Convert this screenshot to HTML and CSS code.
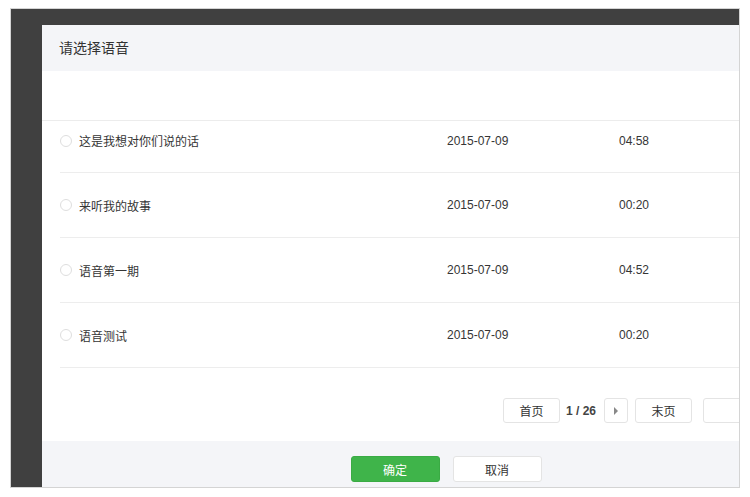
FILE: index.html
```html
<!DOCTYPE html>
<html lang="zh">
<head>
    <meta charset="UTF-8">
    <meta name="viewport" content="width=device-width, initial-scale=1.0">
    <title>请选择语音</title>
    <link rel="stylesheet" href="styles.css">
</head>
<body>
    <div class="screen">
        <div class="dialog">
            <div class="dialog-hd">请选择语音</div>

            <div class="dialog-bd">
                <div class="list-head"></div>
                <ul class="voice-list">
                    <li class="voice-item first">
                        <span class="col-name"><i class="radio"></i>这是我想对你们说的话</span>
                        <span class="col-date">2015-07-09</span>
                        <span class="col-time">04:58</span>
                    </li>
                    <li class="voice-item">
                        <span class="col-name"><i class="radio"></i>来听我的故事</span>
                        <span class="col-date">2015-07-09</span>
                        <span class="col-time">00:20</span>
                    </li>
                    <li class="voice-item">
                        <span class="col-name"><i class="radio"></i>语音第一期</span>
                        <span class="col-date">2015-07-09</span>
                        <span class="col-time">04:52</span>
                    </li>
                    <li class="voice-item">
                        <span class="col-name"><i class="radio"></i>语音测试</span>
                        <span class="col-date">2015-07-09</span>
                        <span class="col-time">00:20</span>
                    </li>
                </ul>

                <div class="pager">
                    <a class="btn-page">首页</a>
                    <span class="page-num">1 / 26</span>
                    <a class="btn-page btn-arrow">
                        <svg width="6" height="8" viewBox="0 0 6 8"><path d="M1 0 L5 4 L1 8 Z" fill="#888"/></svg>
                    </a>
                    <a class="btn-page">末页</a>
                    <input class="page-input" type="text">
                </div>
            </div>

            <div class="dialog-ft">
                <button type="button" class="btn btn-primary">确定</button>
                <button type="button" class="btn btn-default">取消</button>
            </div>
        </div>
    </div>
</body>
</html>
```

FILE: styles.css
```css
body {
    margin: 0;
    background-color: #fff;
    font-family: "Liberation Sans", "Noto Sans CJK SC", sans-serif;
    color: #353535;
}
.screen {
    margin: 8px 0 0 10px;
    width: 728px;
    height: 478px;
    background-color: #404040;
    border: 1px solid #d4d4d4;
    overflow: hidden;
}
.dialog {
    margin: 16px 0 0 31px;
    width: 808px;
    background-color: #fff;
}
.dialog-hd {
    height: 46px;
    line-height: 46px;
    padding-left: 17px;
    font-size: 14px;
    background-color: #f4f5f8;
    color: #333;
}
.list-head {
    height: 49px;
    border-bottom: 1px solid #ececec;
}
.voice-list {
    list-style: none;
    margin: 0;
    padding: 0 0 0 18px;
}
.voice-item {
    display: flex;
    align-items: center;
    height: 64px;
    border-bottom: 1px solid #ededed;
    font-size: 12px;
}
.voice-item.first {
    height: 39px;
    padding-bottom: 12px;
}
.col-name {
    display: flex;
    align-items: center;
    width: 387px;
}
.radio {
    width: 10px;
    height: 10px;
    border: 1px solid #dedede;
    border-radius: 50%;
    margin-right: 7px;
}
.col-date {
    width: 172px;
}
.pager {
    display: flex;
    align-items: center;
    height: 25px;
    margin-top: 30px;
    padding-left: 461px;
    font-size: 12px;
}
.btn-page {
    display: flex;
    align-items: center;
    justify-content: center;
    box-sizing: border-box;
    width: 57px;
    height: 25px;
    border: 1px solid #e4e4e4;
    border-radius: 3px;
    color: #333;
    margin-right: 7px;
}
.btn-arrow {
    width: 24px;
}
.page-num {
    margin: 0 8px 0 -1px;
    font-weight: bold;
    color: #444;
}
.page-input {
    box-sizing: border-box;
    width: 80px;
    height: 25px;
    margin-left: 4px;
    border: 1px solid #e4e4e4;
    border-radius: 3px;
}
.dialog-ft {
    display: flex;
    justify-content: center;
    gap: 13px;
    height: 31px;
    margin-top: 18px;
    padding-top: 15px;
    background-color: #f4f5f8;
}
.btn {
    width: 89px;
    height: 26px;
    font-family: inherit;
    font-size: 12px;
    border-radius: 3px;
    cursor: pointer;
}
.btn-primary {
    background-color: #3fb44a;
    border: 1px solid #3aab44;
    color: #fff;
}
.btn-default {
    background-color: #fff;
    border: 1px solid #e4e4e4;
    color: #333;
}
```
